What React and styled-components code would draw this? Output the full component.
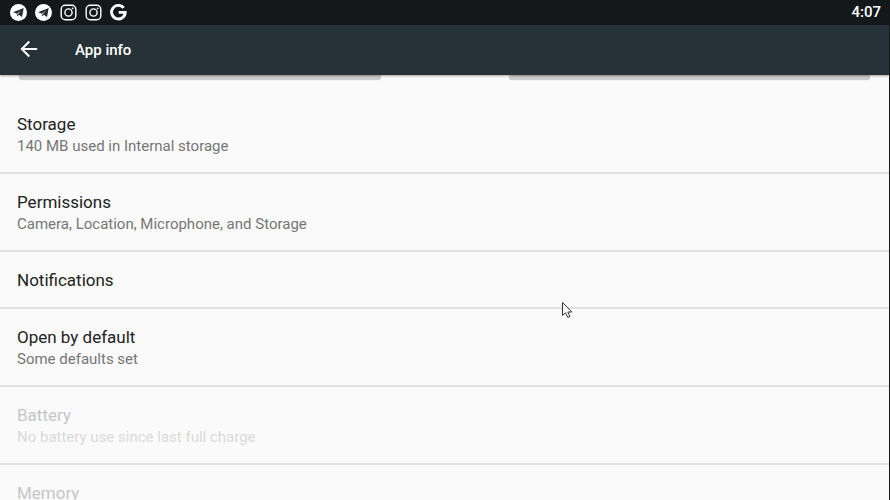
import React from "react";
import styled, { createGlobalStyle } from "styled-components";

const GlobalStyle = createGlobalStyle`
  *, *::before, *::after { box-sizing: border-box; }
  html, body, #root { height: 100%; }
  body {
    margin: 0;
    background: #fafafa;
    font-family: Roboto, "Liberation Sans", sans-serif;
    overflow: hidden;
  }
`;

const Screen = styled.div`
  position: relative;
  display: flex;
  flex-direction: column;
  height: 100%;
  border-right: 1px solid #14171a;
  background: #fafafa;
  overflow: hidden;
`;

const StatusBar = styled.div`
  display: flex;
  flex: none;
  align-items: center;
  justify-content: space-between;
  height: 25px;
  padding: 0 8px 0 10px;
  background: #14181b;
  color: #fff;
`;

const NotificationIcons = styled.div`
  display: flex;
  align-items: center;
  gap: 8px;

  svg {
    display: block;
    width: 17px;
    height: 17px;
  }
`;

const Clock = styled.time`
  font-size: 15px;
  line-height: 25px;
  font-weight: 500;
`;

const AppBar = styled.header`
  position: relative;
  z-index: 1;
  display: flex;
  flex: none;
  align-items: center;
  gap: 31px;
  height: 50px;
  padding: 0 14px;
  background: #263238;
  color: #fff;
  box-shadow: 0 1px 2px rgba(0, 0, 0, 0.35);
`;

const BackButton = styled.button`
  display: grid;
  place-items: center;
  width: 30px;
  height: 32px;
  padding: 0 0 2px;
  border: 0;
  background: none;
  color: inherit;
`;

const PageTitle = styled.h1`
  margin: 0;
  font-size: 15px;
  line-height: 22px;
  font-weight: 500;
`;

const Content = styled.main`
  flex: 1;
  min-height: 0;
  overflow: hidden;
`;

const Actions = styled.div`
  display: grid;
  grid-template-columns: 1fr 1fr;
  gap: 128px;
  height: 21px;
  padding: 0 19px;
`;

const ActionButton = styled.button`
  height: 5px;
  padding: 0;
  border: 0;
  border-radius: 0 0 3px 3px;
  background: #cbcbcb;
  box-shadow: 0 0 1px #cbcbcb;
`;

const Preferences = styled.ul`
  margin: 0;
  padding: 0;
  list-style: none;
`;

const Preference = styled.li`
  padding: 17px 16px 16px 17px;
  border-bottom: 2px solid #e1e1e1;
  color: ${({ $disabled }) => ($disabled ? "#c6c6c6" : "#222")};
`;

const PreferenceTitle = styled.div`
  font-size: 17px;
  line-height: 22px;
`;

const Summary = styled.div`
  margin-top: 1px;
  font-size: 15px;
  line-height: 20px;
  color: ${({ $disabled }) => ($disabled ? "#dadada" : "#767676")};
`;

const Pointer = styled.svg`
  position: absolute;
  z-index: 2;
  left: 561px;
  top: 301px;
  width: 12px;
  height: 19px;
  pointer-events: none;
`;

const TelegramIcon = () => (
  <svg viewBox="0 0 17 17" aria-hidden="true">
    <circle cx="8.5" cy="8.5" r="8.5" fill="currentColor" />
    <path d="M3 8.2L13.7 4.1L12 13L8.9 10.8L7.3 12.3L6.6 9.6Z" fill="#24282b" />
    <path d="M6.9 9.5L11.4 6.2L8.2 9.9L7.5 11.3Z" fill="#b8babb" />
  </svg>
);

const InstagramIcon = () => (
  <svg viewBox="0 0 17 17" fill="none" stroke="currentColor" strokeWidth="1.4" aria-hidden="true">
    <rect x="1.2" y="1.2" width="14.6" height="14.6" rx="4" />
    <circle cx="8.5" cy="8.5" r="3.6" />
    <circle cx="12.7" cy="4.3" r="0.9" fill="currentColor" stroke="none" />
  </svg>
);

const GoogleIcon = () => (
  <svg viewBox="0 0 17 17" fill="none" stroke="currentColor" strokeWidth="2.9" aria-hidden="true">
    <path d="M13.7 3.9A6.8 6.8 0 1 0 15.2 8.4H8.7" />
  </svg>
);

const items = [
  { title: "Storage", summary: "140 MB used in Internal storage" },
  { title: "Permissions", summary: "Camera, Location, Microphone, and Storage" },
  { title: "Notifications" },
  { title: "Open by default", summary: "Some defaults set" },
  { title: "Battery", summary: "No battery use since last full charge", disabled: true },
  { title: "Memory", disabled: true },
];

export default function App() {
  return (
    <>
      <GlobalStyle />
      <Screen>
        <StatusBar>
          <NotificationIcons>
            <TelegramIcon />
            <TelegramIcon />
            <InstagramIcon />
            <InstagramIcon />
            <GoogleIcon />
          </NotificationIcons>
          <Clock>4:07</Clock>
        </StatusBar>
        <AppBar>
          <BackButton type="button" aria-label="Back">
            <svg width="18" height="18" viewBox="0 0 18 18" fill="none" stroke="currentColor" strokeWidth="2" aria-hidden="true">
              <path d="M9.3 1.5L1.8 9L9.3 16.5M2 9H17.2" />
            </svg>
          </BackButton>
          <PageTitle>App info</PageTitle>
        </AppBar>
        <Content>
          <Actions>
            <ActionButton type="button" aria-label="Uninstall" />
            <ActionButton type="button" aria-label="Force stop" />
          </Actions>
          <Preferences>
            {items.map(({ title, summary, disabled }) => (
              <Preference key={title} $disabled={disabled}>
                <PreferenceTitle>{title}</PreferenceTitle>
                {summary && <Summary $disabled={disabled}>{summary}</Summary>}
              </Preference>
            ))}
          </Preferences>
        </Content>
        <Pointer viewBox="0 0 12 19" aria-hidden="true">
          <path
            d="M1.5 1.5V14.5L4.5 11.7L6.8 16.5L9 15.4L6.8 11H10.8Z"
            fill="#fff"
            stroke="#333"
            strokeWidth="1"
          />
        </Pointer>
      </Screen>
    </>
  );
}
